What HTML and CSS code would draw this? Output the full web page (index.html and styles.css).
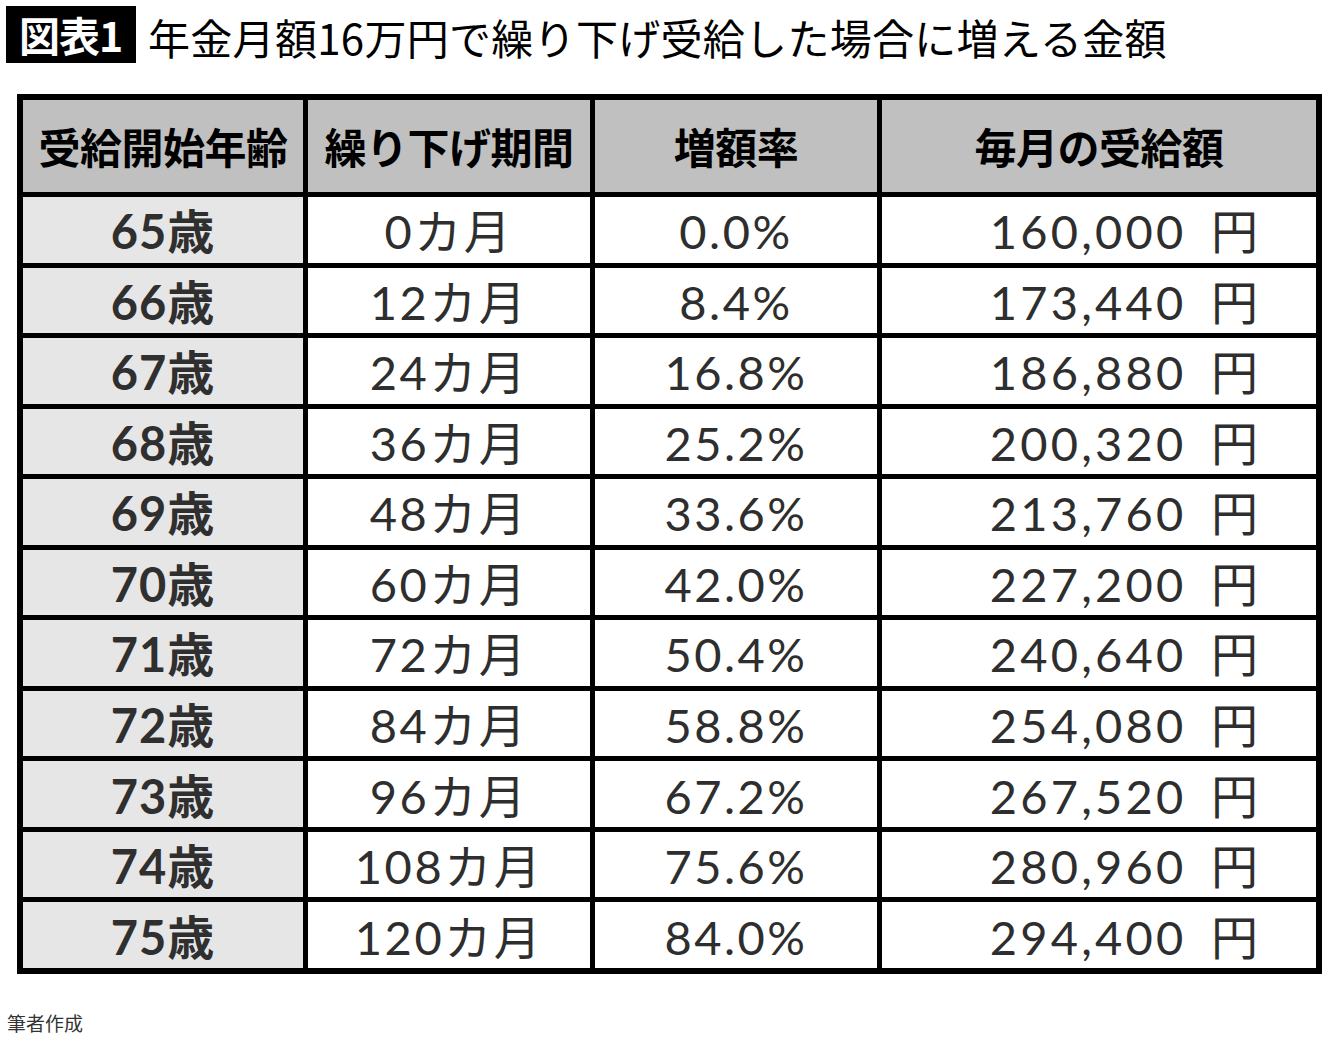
FILE: index.html
```html
<!DOCTYPE html>
<html lang="ja">
<head>
<meta charset="utf-8">
<title>図表1</title>
<link rel="stylesheet" href="styles.css">
</head>
<body>
<div class="title-row">
  <div class="badge">図表1</div>
  <h1 class="title">年金月額16万円で繰り下げ受給した場合に増える金額</h1>
</div>
<table class="tbl">
  <colgroup>
    <col class="c1"><col class="c2"><col class="c3"><col class="c4">
  </colgroup>
  <thead>
    <tr><th>受給開始年齢</th><th>繰り下げ期間</th><th>増額率</th><th>毎月の受給額</th></tr>
  </thead>
  <tbody>
    <tr><td class="age">65歳</td><td>0カ月</td><td>0.0%</td><td class="amt"><span class="num">160,000</span> <span class="yen">円</span></td></tr>
    <tr><td class="age">66歳</td><td>12カ月</td><td>8.4%</td><td class="amt"><span class="num">173,440</span> <span class="yen">円</span></td></tr>
    <tr><td class="age">67歳</td><td>24カ月</td><td>16.8%</td><td class="amt"><span class="num">186,880</span> <span class="yen">円</span></td></tr>
    <tr><td class="age">68歳</td><td>36カ月</td><td>25.2%</td><td class="amt"><span class="num">200,320</span> <span class="yen">円</span></td></tr>
    <tr><td class="age">69歳</td><td>48カ月</td><td>33.6%</td><td class="amt"><span class="num">213,760</span> <span class="yen">円</span></td></tr>
    <tr><td class="age">70歳</td><td>60カ月</td><td>42.0%</td><td class="amt"><span class="num">227,200</span> <span class="yen">円</span></td></tr>
    <tr><td class="age">71歳</td><td>72カ月</td><td>50.4%</td><td class="amt"><span class="num">240,640</span> <span class="yen">円</span></td></tr>
    <tr><td class="age">72歳</td><td>84カ月</td><td>58.8%</td><td class="amt"><span class="num">254,080</span> <span class="yen">円</span></td></tr>
    <tr><td class="age">73歳</td><td>96カ月</td><td>67.2%</td><td class="amt"><span class="num">267,520</span> <span class="yen">円</span></td></tr>
    <tr><td class="age">74歳</td><td>108カ月</td><td>75.6%</td><td class="amt"><span class="num">280,960</span> <span class="yen">円</span></td></tr>
    <tr><td class="age">75歳</td><td>120カ月</td><td>84.0%</td><td class="amt"><span class="num">294,400</span> <span class="yen">円</span></td></tr>
  </tbody>
</table>
<p class="source">筆者作成</p>
</body>
</html>
```

FILE: styles.css
```css
html, body {
  margin: 0;
  padding: 0;
  background: #ffffff;
}

body {
  width: 1340px;
  height: 1040px;
  overflow: hidden;
  font-family: "Noto Sans CJK JP", sans-serif;
  color: #000;
}

.title-row {
  display: flex;
  align-items: center;
  gap: 12px;
  margin: 6px 0 0 6px;
  height: 57px;
}

.badge {
  background: #000;
  color: #fff;
  font-family: "Noto Sans CJK JP", sans-serif;
  font-weight: 700;
  font-size: 41px;
  line-height: 57px;
  height: 57px;
  padding: 0 12px 0 13px;
  box-sizing: border-box;
  width: 130px;
  letter-spacing: -1px;
}

.title {
  margin: 4px 0 0 0;
  font-weight: 400;
  font-size: 42px;
  line-height: 57px;
  letter-spacing: 0.3px;
}

.tbl {
  margin: 31px 0 0 17px;
  width: 1305px;
  height: 880px;
  table-layout: fixed;
  border-collapse: separate;
  border-spacing: 5px;
  border: 1px solid #000;
  background: #000;
}

.c1 { width: 280px; }
.c2 { width: 282px; }
.c3 { width: 282px; }
.c4 { width: 434px; }

.tbl th {
  height: 92px;
  padding: 0;
  background: #c0c0c0;
  color: #000;
  font-family: "Noto Sans CJK JP", sans-serif;
  font-weight: 700;
  font-size: 42px;
  line-height: 1;
  text-align: center;
  vertical-align: middle;
  letter-spacing: -0.5px;
}

.tbl td {
  height: 61px;
  padding: 4px 0 0 0;
  background: #fff;
  color: #2e2e2e;
  font-family: "Lato", "Noto Sans CJK JP", sans-serif;
  font-weight: 400;
  font-size: 47px;
  line-height: 1;
  text-align: center;
  vertical-align: middle;
  letter-spacing: 2.5px;
}

.tbl td.age {
  background: #e7e6e6;
  font-weight: 700;
  color: #2f2f2f;
  letter-spacing: 1px;
}

.tbl td.amt {
  text-align: right;
  padding-right: 58px;
  word-spacing: 10px;
}

.num {
  letter-spacing: 3.2px;
}

.yen {
  letter-spacing: 0;
}

.source {
  margin: 35px 0 0 7px;
  font-size: 19px;
  line-height: 27px;
  color: #333;
}
```
